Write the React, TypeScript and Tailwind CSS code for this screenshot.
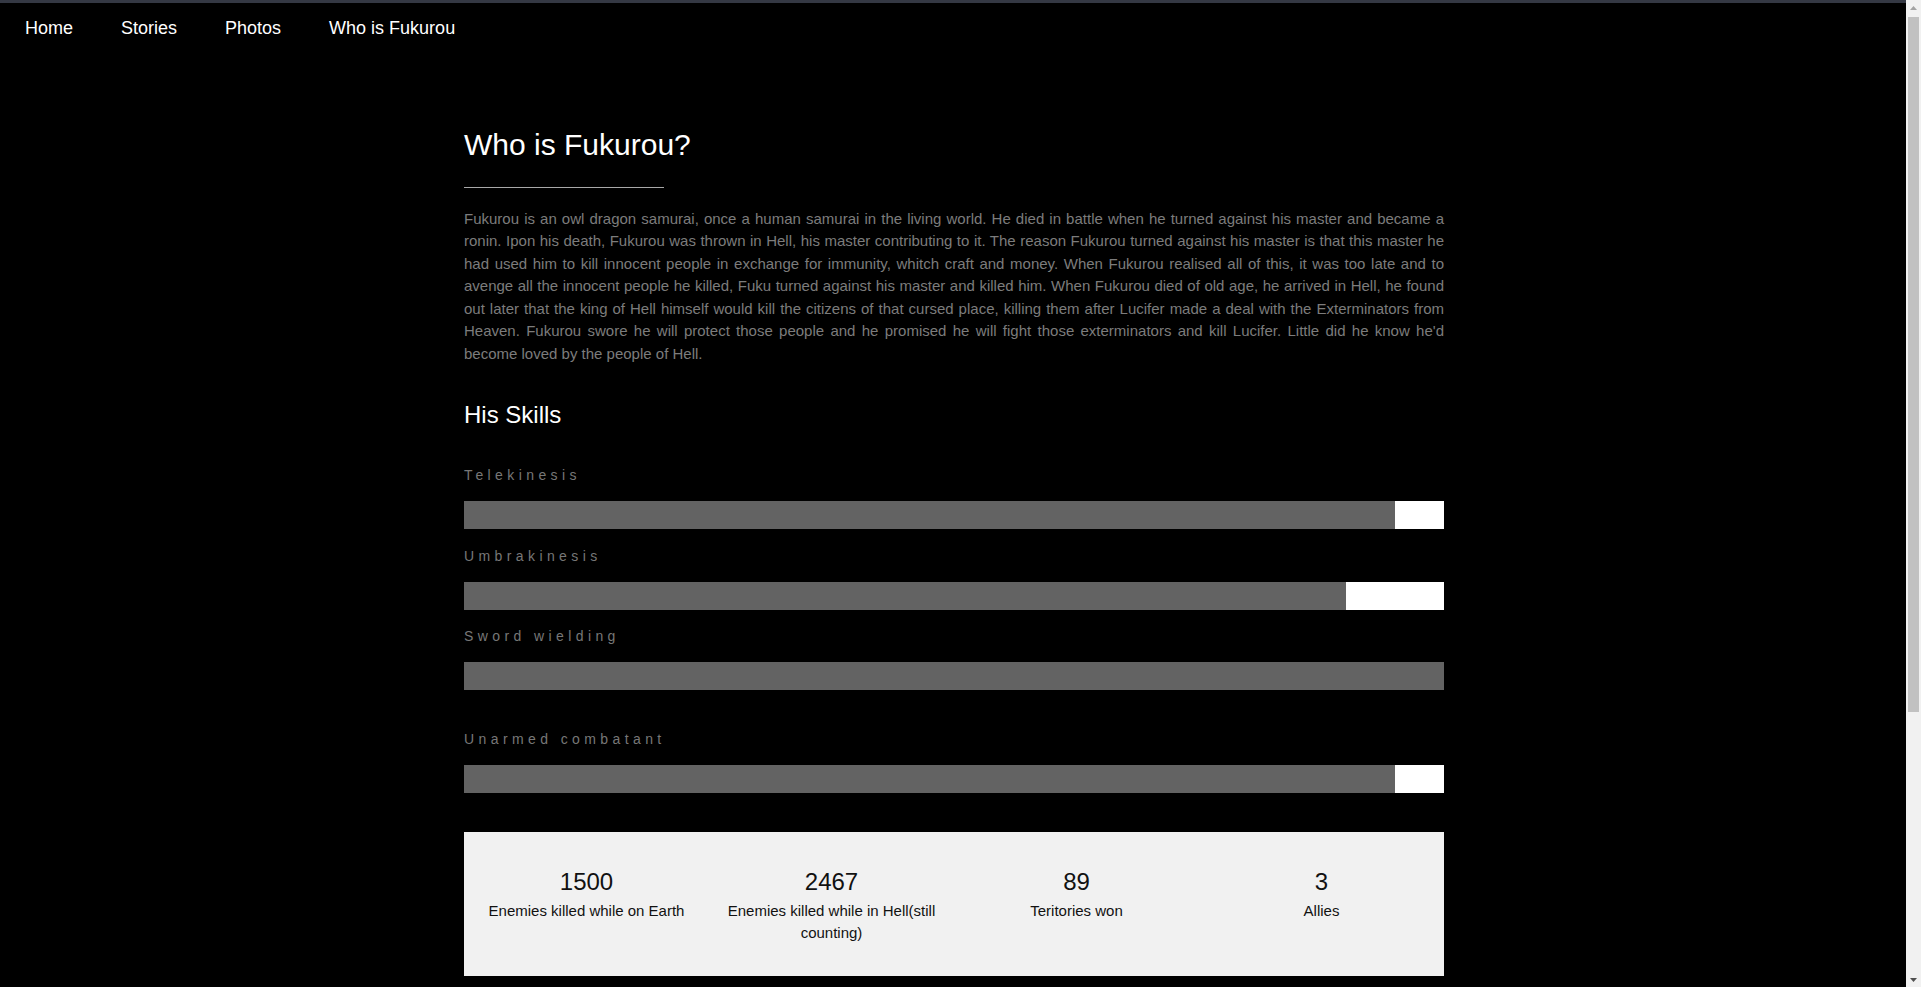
import React from "react";

const skills = [
  { name: "Telekinesis", value: 95, extra: false },
  { name: "Umbrakinesis", value: 90, extra: false },
  { name: "Sword wielding", value: 100, extra: true },
  { name: "Unarmed combatant", value: 95, extra: false },
];

const stats = [
  { num: "1500", label: "Enemies killed while on Earth" },
  { num: "2467", label: "Enemies killed while in Hell(still counting)" },
  { num: "89", label: "Teritories won" },
  { num: "3", label: "Allies" },
];

function Scrollbar() {
  return (
    <div className="flex h-full w-[15px] shrink-0 flex-col bg-[#f1f1f1]">
      <div className="flex h-[15px] items-center justify-center">
        <svg width="7" height="4" viewBox="0 0 7 4">
          <polygon points="0,4 7,4 3.5,0" fill="#a3a3a3" />
        </svg>
      </div>
      <div className="mx-[2px] mt-[2px] h-[695px] bg-[#c1c1c1]" />
      <div className="flex-1" />
      <div className="flex h-[15px] items-center justify-center">
        <svg width="7" height="4" viewBox="0 0 7 4">
          <polygon points="0,0 7,0 3.5,4" fill="#505050" />
        </svg>
      </div>
    </div>
  );
}

export default function App() {
  return (
    <div className="flex h-screen overflow-hidden bg-black font-['Liberation_Sans',Arial,sans-serif]">
      <div className="min-w-0 flex-1 overflow-hidden">
        <div className="h-[3px] bg-[#343843]" />
        <nav className="flex pt-[13px] pl-[1px]">
          {["Home", "Stories", "Photos", "Who is Fukurou"].map((t) => (
            <a key={t} className="px-6 text-[18px] leading-[24px] text-white">
              {t}
            </a>
          ))}
        </nav>
        <div className="pl-[2px]">
          <main className="mx-auto w-[980px] pt-[87px]">
            <h1 className="text-[30px] leading-[36px] text-white">Who is Fukurou?</h1>
            <div className="mt-[24px] h-px w-[200px] bg-[#a8a8a8]" />
            <p className="mt-[19.5px] text-justify text-[15px] leading-[22.5px] text-[#7c7c7c]">
              Fukurou is an owl dragon samurai, once a human samurai in the living world. He died in battle when he turned against his master and became a ronin. Ipon his death, Fukurou was thrown in Hell, his master contributing to it. The reason Fukurou turned against his master is that this master he had used him to kill innocent people in exchange for immunity, whitch craft and money. When Fukurou realised all of this, it was too late and to avenge all the innocent people he killed, Fuku turned against his master and killed him. When Fukurou died of old age, he arrived in Hell, he found out later that the king of Hell himself would kill the citizens of that cursed place, killing them after Lucifer made a deal with the Exterminators from Heaven. Fukurou swore he will protect those people and he promised he will fight those exterminators and kill Lucifer. Little did he know he'd become loved by the people of Hell.
            </p>
            <h2 className="mt-[36px] text-[24px] leading-[28px] text-white">His Skills</h2>
            <div className="mt-[38px] flex flex-col">
              {skills.map((s, i) => (
                <div
                  key={s.name}
                  className={
                    i === skills.length - 1 ? "" : s.extra ? "mb-[41.3px]" : "mb-[18.5px]"
                  }
                >
                  <div className="text-[14px] leading-[16px] tracking-[4.4px] text-[#777777]">
                    {s.name}
                  </div>
                  <div className="mt-[18px] h-[28px] bg-white">
                    <div className="h-full bg-[#636363]" style={{ width: `${s.value}%` }} />
                  </div>
                </div>
              ))}
            </div>
            <div className="mt-[38.7px] grid grid-cols-4 bg-[#f1f1f1] pt-[36px] pb-[31px]">
              {stats.map((s) => (
                <div key={s.num} className="px-[15px] text-center text-[#111111]">
                  <div className="text-[24px] leading-[28px]">{s.num}</div>
                  <div className="mt-[4px] text-[15px] leading-[22.5px]">{s.label}</div>
                </div>
              ))}
            </div>
          </main>
        </div>
      </div>
      <Scrollbar />
    </div>
  );
}
